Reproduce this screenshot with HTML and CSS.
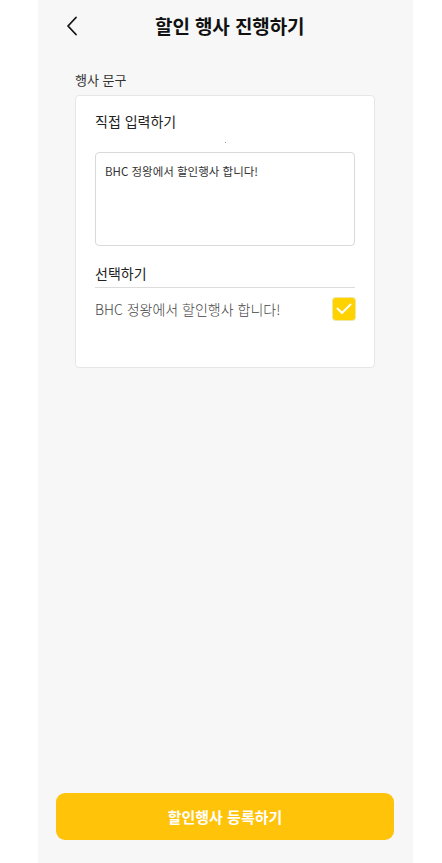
FILE: index.html
```html
<!DOCTYPE html>
<html lang="ko">
<head>
<meta charset="utf-8">
<link rel="stylesheet" href="styles.css">
</head>
<body>
<div class="app">
  <header class="header">
    <button class="back" aria-label="뒤로">
      <svg width="12" height="20" viewBox="0 0 12 20"><path d="M10 1.5 L2 10 L10 18.5" fill="none" stroke="#111" stroke-width="1.8" stroke-linecap="round" stroke-linejoin="round"/></svg>
    </button>
    <h1 class="title">할인 행사 진행하기</h1>
  </header>
  <main class="content">
    <div class="section-label">행사 문구</div>
    <div class="card">
      <div class="card-title">직접 입력하기</div>
      <div class="dot"></div>
      <div class="textarea">BHC 정왕에서 할인행사 합니다!</div>
      <div class="select-title">선택하기</div>
      <div class="option">
        <span class="option-text">BHC 정왕에서 할인행사 합니다!</span>
        <span class="check">
          <svg width="16" height="12" viewBox="0 0 16 12"><path d="M1.5 5.5 L6 10 L14.5 1.5" fill="none" stroke="#fff" stroke-width="2" stroke-linecap="round" stroke-linejoin="round"/></svg>
        </span>
      </div>
    </div>
  </main>
  <div class="footer">
    <button class="submit">할인행사 등록하기</button>
  </div>
</div>
</body>
</html>
```
FILE: styles.css
```css
* { box-sizing: border-box; }
html, body { margin: 0; padding: 0; background: #fff; }
body {
  font-family: "Noto Sans CJK KR", "Noto Sans", sans-serif;
  color: #222;
}
.app {
  margin-left: 38px;
  width: 375px;
  min-height: 863px;
  background: #f7f7f7;
  display: flex;
  flex-direction: column;
}
.header {
  height: 50px;
  display: flex;
  align-items: center;
  padding-left: 24px;
}
.back {
  border: 0;
  background: transparent;
  padding: 0;
  width: 20px;
  height: 24px;
  display: flex;
  align-items: center;
  justify-content: center;
  margin-top: 1px;
}
.title {
  margin: 0 0 0 73px;
  font-size: 19px;
  font-weight: 700;
  color: #111;
  letter-spacing: -0.1px;
}
.content {
  padding: 21px 38px 0 37px;
}
.section-label {
  font-size: 13px;
  color: #333;
  line-height: 18px;
  margin-bottom: 6px;
}
.card {
  background: #fff;
  border: 1px solid #e6e6e6;
  border-radius: 4px;
  padding: 15px 19px 47px 19px;
}
.card-title {
  font-size: 14px;
  color: #222;
  line-height: 20px;
}
.dot {
  width: 1px;
  height: 1px;
  background: #999;
  margin: 11px auto 0;
}
.textarea {
  margin-top: 9px;
  height: 94px;
  border: 1px solid #d9d9d9;
  border-radius: 4px;
  padding: 9px 9px;
  font-size: 11.5px;
  line-height: 18px;
  color: #333;
}
.select-title {
  margin-top: 17px;
  font-size: 14px;
  line-height: 20px;
  color: #222;
  padding-bottom: 4px;
  border-bottom: 1px solid #dcdcdc;
}
.option {
  margin-top: 10px;
  display: flex;
  align-items: center;
  justify-content: space-between;
}
.option-text {
  font-size: 14px;
  color: #444;
  font-weight: 300;
}
.check {
  width: 22px;
  height: 22px;
  border-radius: 3px;
  background: #ffd200;
  display: flex;
  align-items: center;
  justify-content: center;
  box-shadow: 0 0 0 1px #f2e6a0;
}
.footer {
  margin-top: auto;
  padding: 0 19px 23px 18px;
}
.submit {
  width: 100%;
  height: 47px;
  border: 0;
  border-radius: 9px;
  background: #ffc30a;
  color: #fff;
  font-family: "Noto Sans CJK KR", "Noto Sans", sans-serif;
  font-size: 15px;
  font-weight: 700;
}
```
